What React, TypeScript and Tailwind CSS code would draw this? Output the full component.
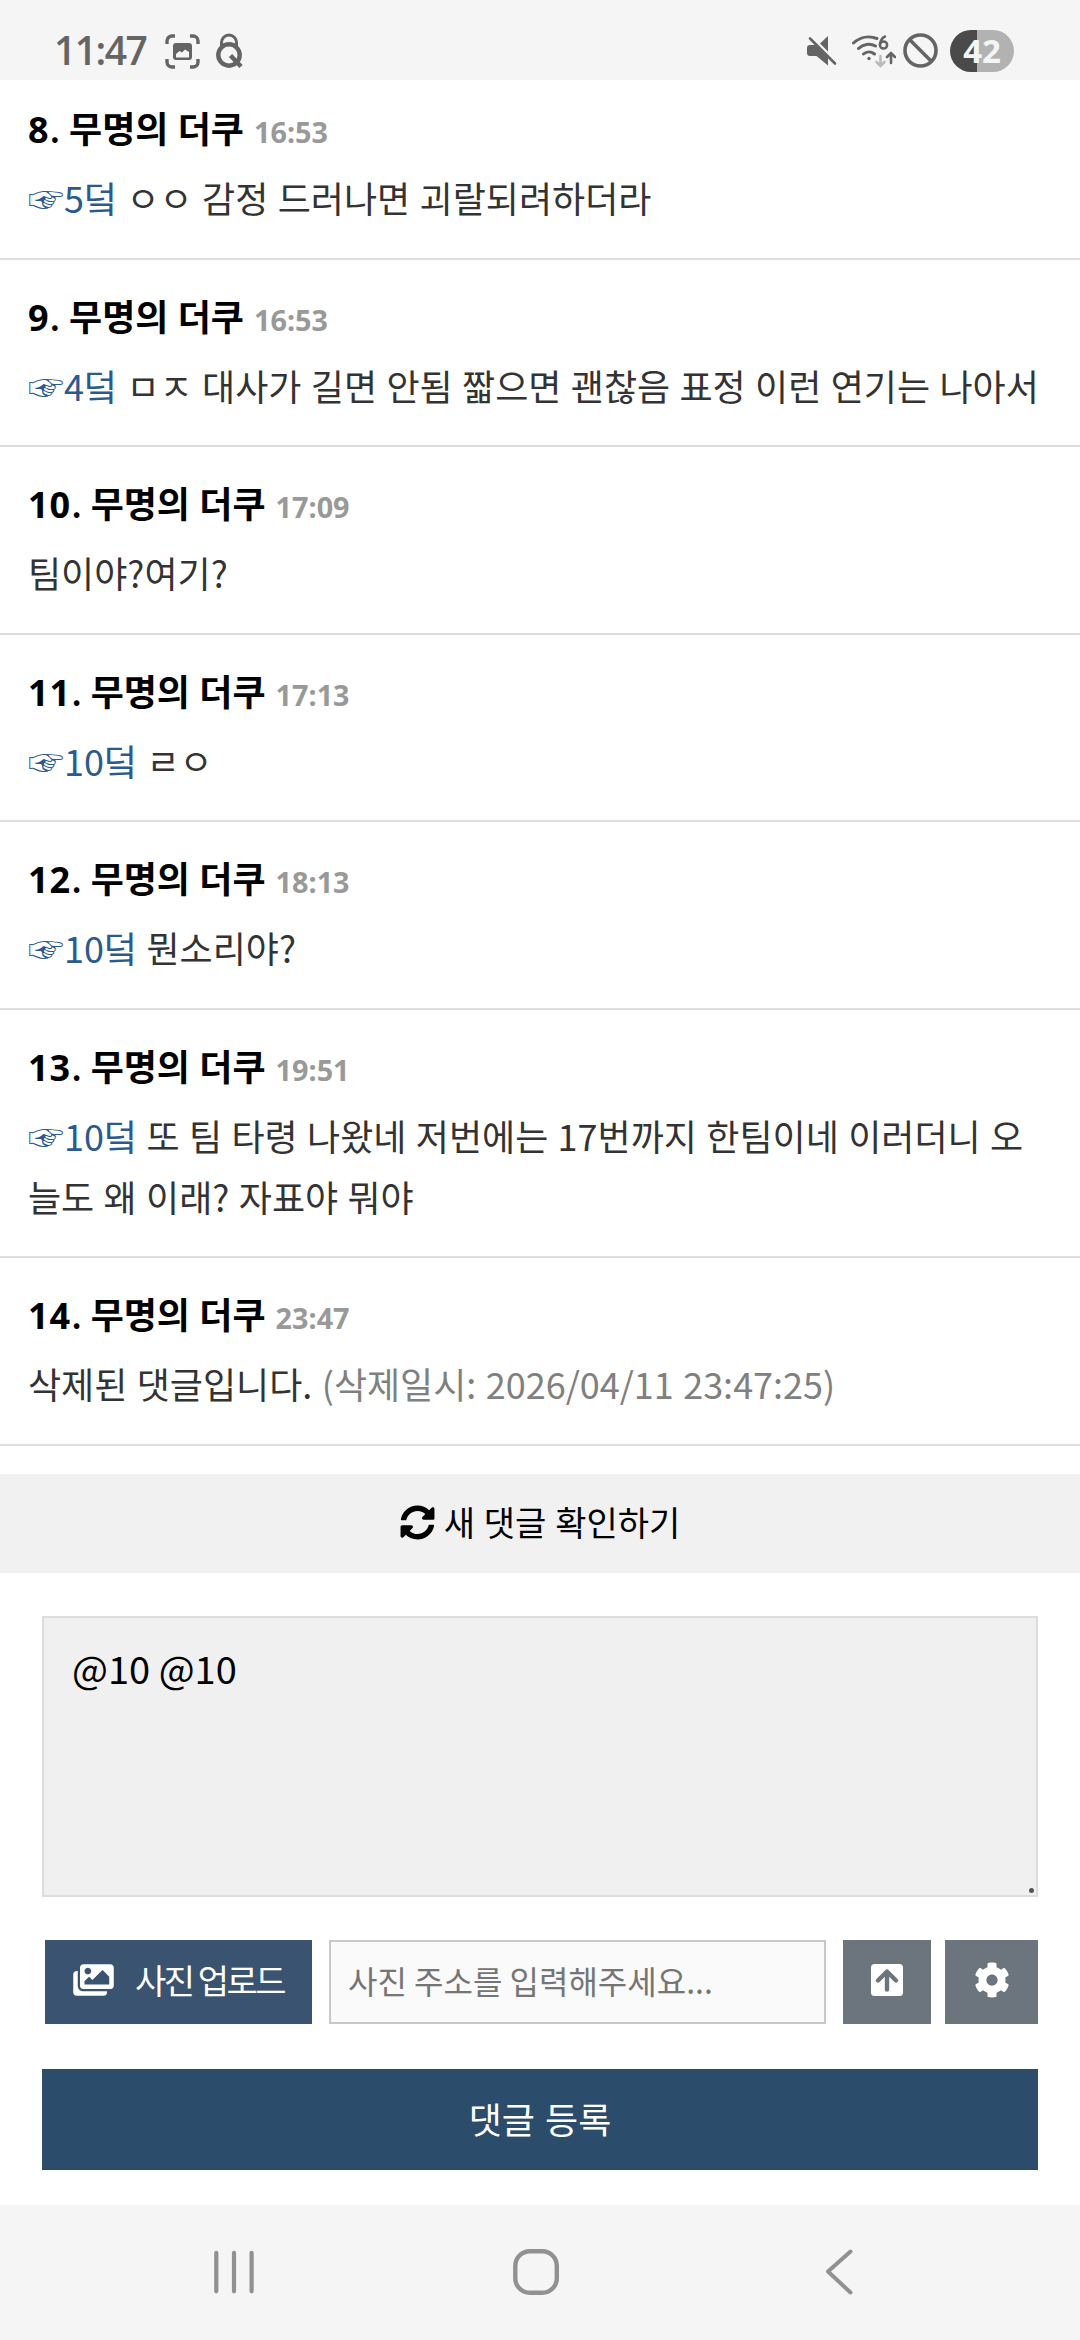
import { useState } from 'react'
import { FaCog, FaImages, FaSyncAlt } from 'react-icons/fa'
import { clsx } from 'clsx'

type Comment = {
  no: number
  time: string
  replyTo?: number
  text: string
  deletedAt?: string
  tall?: boolean
}

const AUTHOR = '무명의 더쿠'

const COMMENTS: Comment[] = [
  { no: 8, time: '16:53', replyTo: 5, text: 'ㅇㅇ 감정 드러나면 괴랄되려하더라' },
  { no: 9, time: '16:53', replyTo: 4, text: 'ㅁㅈ 대사가 길면 안됨 짧으면 괜찮음 표정 이런 연기는 나아서' },
  { no: 10, time: '17:09', text: '팀이야?여기?' },
  { no: 11, time: '17:13', replyTo: 10, text: 'ㄹㅇ' },
  { no: 12, time: '18:13', replyTo: 10, text: '뭔소리야?' },
  {
    no: 13,
    time: '19:51',
    replyTo: 10,
    text: '또 팀 타령 나왔네 저번에는 17번까지 한팀이네 이러더니 오늘도 왜 이래? 자표야 뭐야',
    tall: true,
  },
  { no: 14, time: '23:47', text: '삭제된 댓글입니다.', deletedAt: '2026/04/11 23:47:25' },
]

function StatusBar() {
  return (
    <header className="relative z-10 flex h-20 shrink-0 items-start bg-[#f5f5f5] text-[#646464]">
      <span className="ml-[54px] mt-[23px] w-[111px] font-['Open_Sans',sans-serif] text-[39px] leading-[54px] font-semibold tracking-[-1.5px]">
        11:47
      </span>
      {/* capture */}
      <svg className="mt-[34px] h-[35px] w-[35px]" viewBox="0 0 35 35" fill="none">
        <path
          d="M2 10V7a5 5 0 0 1 5-5h3M25 2h3a5 5 0 0 1 5 5v3M33 25v3a5 5 0 0 1-5 5h-3M10 33H7a5 5 0 0 1-5-5v-3"
          stroke="currentColor"
          strokeWidth="3.4"
        />
        <path
          fillRule="evenodd"
          d="M11 9h13a3 3 0 0 1 3 3v11a3 3 0 0 1-3 3H11a3 3 0 0 1-3-3V12a3 3 0 0 1 3-3Zm0 14.500h13v-5.500l-4-2.500-3 3-2.500-1.500-3.500 3Z"
          fill="currentColor"
        />
      </svg>
      {/* lock with a Q-shaped body */}
      <svg className="mt-[33px] ml-[16px] h-[36px] w-[27px]" viewBox="0 0 27 36" fill="none" stroke="currentColor">
        <path d="M5.500 13V9.500a7.500 7.500 0 0 1 15 0V13" strokeWidth="3" />
        <circle cx="13" cy="22" r="10.700" strokeWidth="4.400" />
        <path d="M14.500 22.500 25 33.500" strokeWidth="4.600" />
      </svg>

      {/* muted */}
      <svg className="mt-[36px] ml-auto h-[30px] w-[30px]" viewBox="0 0 30 30" fill="none">
        <path d="M21 0v15.500L13 7.500ZM3 9h5.500L21 21.500V29.500L9.500 20H3a3 3 0 0 1-3-3v-5a3 3 0 0 1 3-3Z" fill="currentColor" />
        <path d="M3 2.500 28 27.500" stroke="currentColor" strokeWidth="2.600" strokeLinecap="round" />
      </svg>
      {/* wifi */}
      <svg className="mt-[34px] ml-[15px] h-[36px] w-[44px]" viewBox="0 0 44 36" fill="none" stroke="currentColor" strokeWidth="3" strokeLinecap="round">
        <path d="M1.500 9C8 3 17 1.500 25 4.500M6.500 14.500C11 10 18 9 23.500 12M11.500 20c3-2.800 7.500-2.800 11 0" />
        <circle cx="17" cy="24.500" r="1.700" fill="currentColor" stroke="none" />
        <circle cx="31.500" cy="11" r="3.600" strokeWidth="2.500" />
        <path d="M28 10.500C28.500 6.500 30.500 3.500 33 2.500" strokeWidth="2.500" />
        <path d="M28.500 22v9.500M24.500 28l4 4 4-4" stroke="#bababa" strokeWidth="2.600" />
        <path d="M39 29V20M35 23l4-4 4 4" strokeWidth="2.600" />
      </svg>
      {/* blocked */}
      <svg className="mt-[33px] ml-[7px] h-[35px] w-[35px]" viewBox="0 0 35 35" fill="none" stroke="currentColor" strokeWidth="3.600">
        <circle cx="17.500" cy="17.500" r="15.500" />
        <path d="m7 7 21 21" />
      </svg>
      <div className="mt-[30px] mr-[66px] ml-[12px] flex h-[42px] w-[64px] items-center justify-center rounded-full bg-[linear-gradient(90deg,#4a4a4a_27px,#b2b2b2_27px)] pb-px">
        <span className="font-['Open_Sans',sans-serif] text-[33px] leading-none font-bold text-[#f5f5f5]">42</span>
      </div>
    </header>
  )
}

function CommentRow({ comment }: { comment: Comment }) {
  return (
    <li
      className={clsx(
        'border-b-2 border-[#dddddd] pr-[30px] pl-[28px]',
        comment.tall ? 'h-[248.25px]' : 'h-[187.5px]',
      )}
    >
      <div className="flex items-baseline pt-[27px] leading-[56px] font-bold text-black">
        <span className="font-['Noto_Sans','Noto_Sans_CJK_KR',sans-serif] text-[36px] whitespace-pre">
          <span className="tracking-[1px]">{comment.no}</span>
          <span className="font-['Noto_Sans_CJK_KR',sans-serif] font-medium tracking-[0.3px]">. </span>
          {AUTHOR}
        </span>
        <span className="ml-[10px] font-['Noto_Sans',sans-serif] text-[28.8px] text-[#999999]">{comment.time}</span>
      </div>
      <p className="mt-[7px] text-[36px] leading-[60.75px] break-all text-[#333333] [word-spacing:1.3px]">
        {comment.replyTo && <a className="text-[#2a5a8e]">☞{comment.replyTo}덬</a>}
        {comment.replyTo && ' '}
        {comment.text}
        {comment.deletedAt && <span className="text-[#808080]"> (삭제일시: {comment.deletedAt})</span>}
      </p>
    </li>
  )
}

function CommentForm() {
  const [value, setValue] = useState('@10 @10')

  return (
    <form className="flex flex-col px-[42px] pt-[43px]" onSubmit={e => e.preventDefault()}>
      <div className="relative h-[281px]">
        <textarea
          value={value}
          onChange={e => setValue(e.target.value)}
          className="block h-full w-full resize-none border-2 border-[#dddddd] bg-[#f0f0f0] px-[28px] pt-[22px] text-[38px] leading-[56px] text-black outline-none"
        />
        <span className="absolute right-[4px] bottom-[4px] h-[5px] w-[5px] rounded-full bg-[#555555]" />
      </div>

      <div className="mt-[43px] flex h-[84px] pl-[3px]">
        <button type="button" className="flex w-[267px] items-center bg-[#395370] pb-[4px] pl-[28px] text-white">
          <FaImages className="h-[36px] w-[41px]" />
          <span className="ml-[21px] text-[34px] leading-none tracking-[-2.5px]">사진 업로드</span>
        </button>
        <input
          placeholder="사진 주소를 입력해주세요..."
          className="ml-[17px] w-[497px] border-2 border-[#c8c8c8] bg-[#fafafa] px-[17px] pb-[4px] text-[32px] outline-none placeholder:text-[#757575]"
        />
        <button type="button" className="ml-[17px] flex w-[88px] items-center justify-center bg-[#6c757d] pb-[4px]">
          <svg className="h-[32px] w-[32px]" viewBox="0 0 32 32" fill="none">
            <rect width="32" height="32" rx="3.500" fill="#fff" />
            <path d="M16 25.500V8M7 16.500 16 7.500l9 9" stroke="#6c757d" strokeWidth="4.400" strokeLinecap="round" strokeLinejoin="round" />
          </svg>
        </button>
        <button type="button" className="ml-[14px] flex w-[93px] items-center justify-center bg-[#6c757d] pb-[4px] text-white">
          <FaCog className="h-[36px] w-[36px]" />
        </button>
      </div>

      <button type="submit" className="mt-[45px] h-[101px] bg-[#2c4c6c] pb-[4px] text-[36px] text-white [word-spacing:2px]">
        댓글 등록
      </button>
    </form>
  )
}

function NavBar() {
  return (
    <nav className="mt-auto flex h-[135px] shrink-0 items-start bg-[#f5f5f5] pt-[43px] text-[#919191]">
      <svg className="ml-[210px] h-[48px] w-[48px]" viewBox="0 0 48 48" fill="none" stroke="currentColor" strokeWidth="4.200" strokeLinecap="round">
        <path d="M6.300 4.800v38.500M24 4.800v38.500M41.600 4.800v38.500" />
      </svg>
      <svg className="ml-[254px] h-[48px] w-[48px]" viewBox="0 0 48 48" fill="none" stroke="currentColor" strokeWidth="4.400">
        <rect x="3.300" y="3.200" width="41.500" height="41.500" rx="14.500" />
      </svg>
      <svg className="ml-[262px] h-[48px] w-[32px]" viewBox="0 0 32 48" fill="none" stroke="currentColor" strokeWidth="4" strokeLinecap="round" strokeLinejoin="round">
        <path d="M28.500 3.500 6 23.500l22.500 21" />
      </svg>
    </nav>
  )
}

export default function App() {
  return (
    <div className="flex h-[2340px] w-[1080px] flex-col overflow-hidden bg-white font-['Noto_Sans_CJK_KR',sans-serif]">
      <StatusBar />
      <ul className="-mt-[7.75px]">
        {COMMENTS.map(c => (
          <CommentRow key={c.no} comment={c} />
        ))}
      </ul>
      <button className="mt-[28.5px] flex h-[99px] shrink-0 items-center justify-center bg-[#f1f1f1] text-[34px] text-black">
        <FaSyncAlt className="mr-[9px] mb-[3px] h-[35px] w-[35px]" />
        <span className="mb-[5px] [word-spacing:1.2px]">새 댓글 확인하기</span>
      </button>
      <CommentForm />
      <NavBar />
    </div>
  )
}
